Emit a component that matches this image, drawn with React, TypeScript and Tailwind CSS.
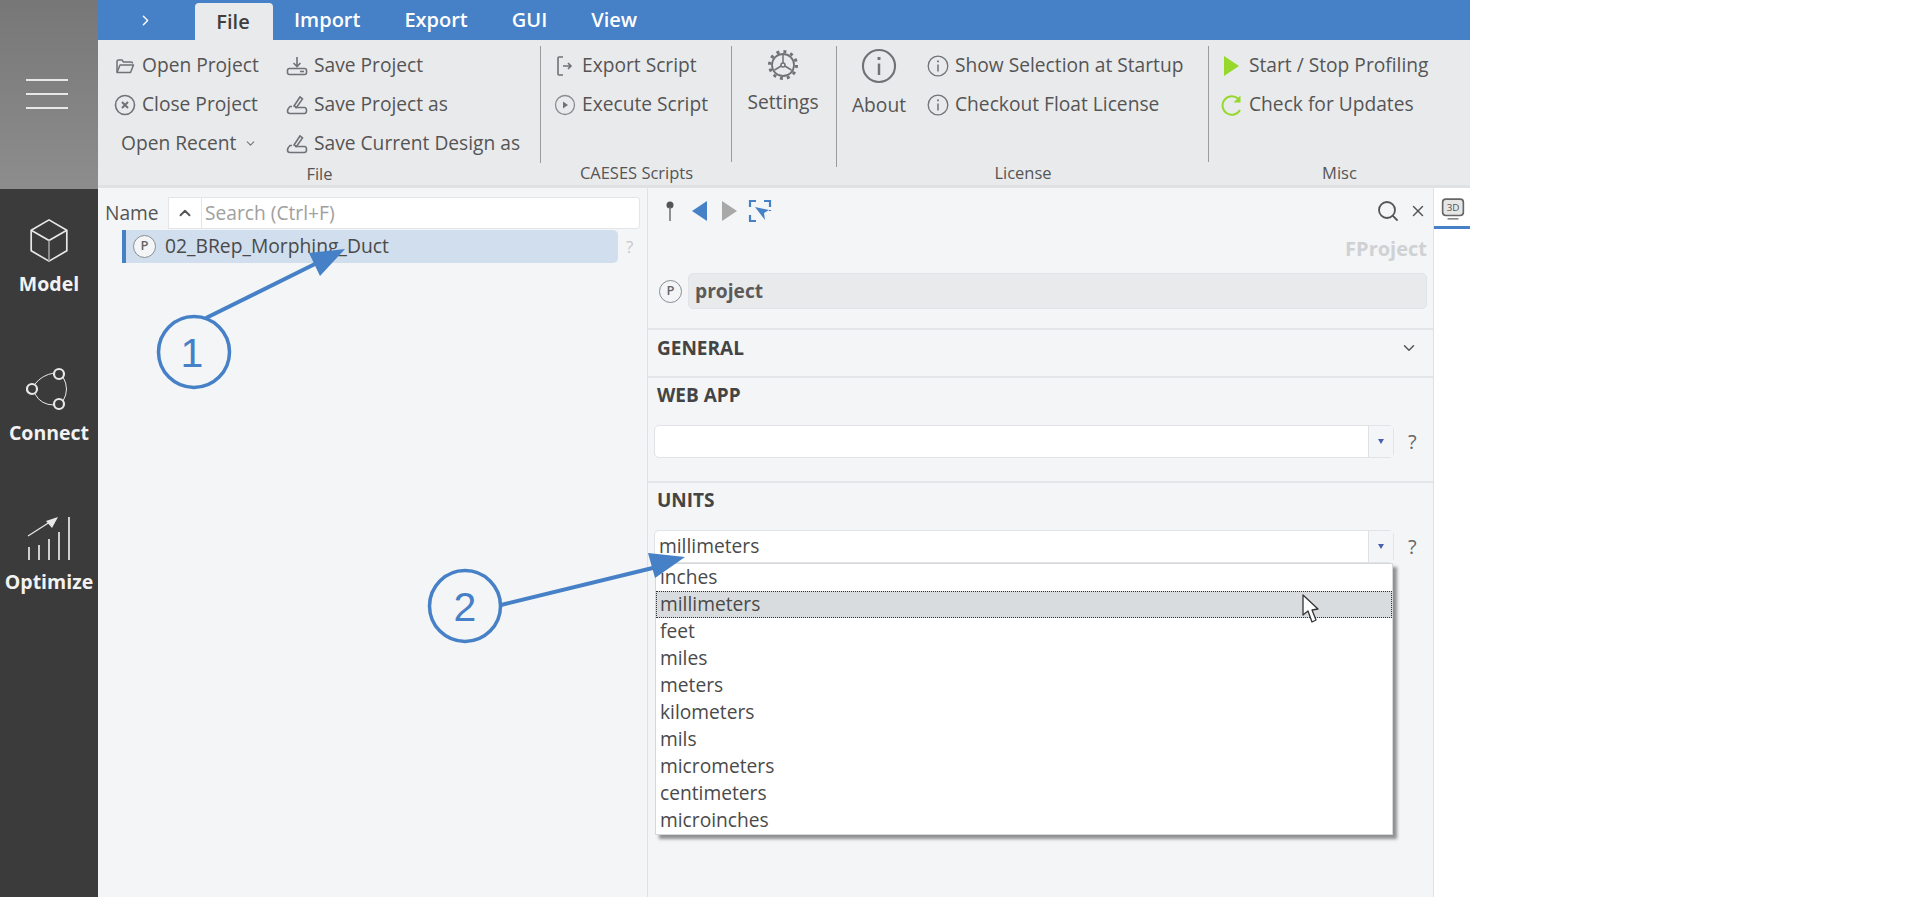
import { ReactNode } from "react";
import { ChevronDown, ChevronRight, ChevronUp, Search, X } from "lucide-react";

const stroke = "#6f7276";

// ── ribbon icons ──
const IconFolder = () => (
  <svg width="20" height="20" viewBox="0 0 20 20" fill="none" stroke={stroke} strokeWidth="1.5">
    <path d="M2 16V5.5Q2 4 3.5 4H7l1.5 2H16q1.5 0 1.5 1.500" />
    <path d="M2 16.500h13.500L18.500 9H5z" strokeLinejoin="round" />
  </svg>
);
const IconClose = () => (
  <svg width="22" height="22" viewBox="0 0 22 22" fill="none" stroke={stroke} strokeWidth="1.6">
    <circle cx="11" cy="11" r="9.500" />
    <path d="M8 8l6 6M14 8l-6 6" strokeWidth="2" />
  </svg>
);
const IconSave = () => (
  <svg width="22" height="20" viewBox="0 0 22 20" fill="none" stroke={stroke} strokeWidth="1.600">
    <path d="M11 1v9M7.500 7l3.500 3.500L14.500 7" />
    <rect x="1.500" y="12.500" width="19" height="6" rx="2" />
    <path d="M14 15.500h4" />
  </svg>
);
const IconSaveAs = () => (
  <svg width="22" height="20" viewBox="0 0 22 20" fill="none" stroke={stroke} strokeWidth="1.600">
    <path d="M8 11l6-9 2.500 2-6 8.500z" />
    <path d="M6 11.500H4Q1.500 14 1.500 16 1.500 18.500 4 18.500H18.500Q20.500 18.500 20.500 15.500 20.500 12.500 18.500 12.500H9" />
  </svg>
);
const IconExport = () => (
  <svg width="20" height="22" viewBox="0 0 20 22" fill="none" stroke={stroke} strokeWidth="1.600">
    <path d="M8 2H4Q3 2 3 3V19Q3 20 4 20H8" />
    <path d="M8 11h8M13 8l3 3-3 3" />
  </svg>
);
const IconExecute = () => (
  <svg width="22" height="22" viewBox="0 0 22 22" fill="none">
    <circle cx="11" cy="11" r="9.500" stroke="#8a8d90" strokeWidth="1.300" />
    <path d="M9 7.500l5 3.500-5 3.500z" fill={stroke} />
  </svg>
);
const IconGear = () => (
  <svg width="32" height="32" viewBox="0 0 32 32" fill="none" stroke={stroke}>
    <circle cx="16" cy="16" r="11" strokeWidth="1.800" />
    <circle cx="16" cy="16" r="13.500" strokeWidth="3" strokeDasharray="3 4.070" />
    <circle cx="16" cy="16" r="2" strokeWidth="1.500" />
    <path d="M16 14V5.500M14.200 17L7.500 21M17.800 17l6.700 4" strokeWidth="1.500" />
  </svg>
);
const IconInfo = ({ size }: { size: number }) => (
  <svg width={size} height={size} viewBox="0 0 22 22" fill="none" stroke={stroke}>
    <circle cx="11" cy="11" r="9.800" strokeWidth="1.300" />
    <path d="M11 9.500V16.500" strokeWidth="1.500" />
    <path d="M11 5.500v1.800" strokeWidth="1.800" />
  </svg>
);
const IconPlay = () => (
  <svg width="18" height="22" viewBox="0 0 18 22">
    <path d="M1 1l15 10L1 21z" fill="#96d82c" />
  </svg>
);
const IconRefresh = () => (
  <svg width="22" height="24" viewBox="0 0 22 24" fill="none">
    <path d="M17 5.500A9.300 9.300 0 1 0 19 17" stroke="#96d82c" strokeWidth="2" />
    <path d="M19.500 2.500v7h-7z" fill="#96d82c" />
  </svg>
);

// ── side bar icons ──
const IconCube = () => (
  <svg width="40" height="45" viewBox="0 0 42 48" fill="none" stroke="#e8e8e8" strokeWidth="1.800" strokeLinejoin="round">
    <path d="M21 2L40 13V35L21 46 2 35V13z" />
    <path d="M2 13l19 11 19-11" />
    <path d="M21 24v22" stroke="#9a9a9a" />
  </svg>
);
const IconConnect = () => (
  <svg width="46" height="50" viewBox="0 0 46 50" fill="none" stroke="#e8e8e8">
    <path d="M9 20Q16 11 28 9M37 13Q44 25 37 37M28 41Q15 41 9 30" strokeWidth="1" />
    <g strokeWidth="2.200">
      <circle cx="6" cy="25" r="5" />
      <circle cx="33" cy="10" r="5" />
      <circle cx="33" cy="40" r="5" />
    </g>
  </svg>
);
const IconOptimize = () => (
  <svg width="46" height="45" viewBox="0 0 46 45" fill="none" stroke="#e8e8e8" strokeWidth="1.700">
    <path d="M43 1v43M33 16v28M23 23v21M13 29v15M3 31v13" />
    <path d="M2 20L27 4" strokeWidth="1.200" />
    <path d="M32 1L20 5l6 7z" fill="#e8e8e8" stroke="none" />
  </svg>
);

const IconP = ({ size = 23 }: { size?: number }) => (
  <span
    className="flex shrink-0 items-center justify-center rounded-full border border-[#8a8d90] bg-[#f3f5f7] text-[13px] font-semibold text-[#666]"
    style={{ width: size, height: size }}
  >
    P
  </span>
);

function RibbonItem({ icon, label }: { icon: ReactNode; label: string }) {
  return (
    <div className="flex h-[39px] items-center whitespace-nowrap">
      <span className="flex w-[30px] shrink-0 items-center justify-center">{icon}</span>
      <span className="ml-[2px]">{label}</span>
    </div>
  );
}

function RibbonGroup({ label, width, last, children }: { label: string; width: string; last?: boolean; children: ReactNode }) {
  return (
    <div className={`flex shrink-0 flex-col ${width}`}>
      <div className={`flex h-[121px] ${last ? "" : "border-r border-[#9a9c9e]"}`}>{children}</div>
      <div className="-mt-[1px] text-center text-[16.500px] leading-[24px] text-[#555]">{label}</div>
    </div>
  );
}

function Combo({ value }: { value?: string }) {
  return (
    <div className="flex items-center pl-[6px]">
      <div className="flex h-[33px] w-[740px] items-center rounded-[5px] border border-[#e1e3e6] bg-white">
        <span className="flex-1 pl-[4px] text-[19.200px] text-[#4a4a4a]">{value}</span>
        <span className="flex h-full w-[25px] items-center justify-center border-l border-[#dfe1e4] bg-[#f3f5f7]">
          <span className="h-0 w-0 border-x-[3.500px] border-t-[5px] border-x-transparent border-t-[#4a5fb0]" />
        </span>
      </div>
      <span className="ml-[14px] text-[20px] text-[#666]">?</span>
    </div>
  );
}

const units = ["inches", "millimeters", "feet", "miles", "meters", "kilometers", "mils", "micrometers", "centimeters", "microinches"];

export default function App() {
  return (
    <div className="relative h-[897px] w-[1920px] overflow-hidden bg-white font-['Open_Sans',sans-serif] text-[#4a4a4a]">
      <div className="flex h-full w-[1470px]">
        {/* ── Side bar ── */}
        <aside className="flex w-[98px] shrink-0 flex-col bg-[#3b3b3b]">
          <div className="flex h-[189px] flex-col items-center justify-center gap-[12px] bg-gradient-to-b from-[#777777] to-[#8d8d8d] pb-[2px] pr-[4px]">
            <span className="h-[2px] w-[42px] bg-[#e8e8e8]" />
            <span className="h-[2px] w-[42px] bg-[#e8e8e8]" />
            <span className="h-[2px] w-[42px] bg-[#e8e8e8]" />
          </div>
          {[
            { label: "Model", icon: <IconCube /> },
            { label: "Connect", icon: <IconConnect /> },
            { label: "Optimize", icon: <IconOptimize /> },
          ].map((item) => (
            <div key={item.label} className="flex h-[149px] flex-col items-center pt-[26px]">
              <div className="flex h-[50px] items-center">{item.icon}</div>
              <span className="mt-[4px] text-[19.500px] font-bold text-[#f2f2f2]">{item.label}</span>
            </div>
          ))}
        </aside>

        <div className="flex min-w-0 flex-1 flex-col">
          {/* ── Tabs ── */}
          <div className="flex h-[40px] items-end bg-[#4680c6] text-[20px] font-semibold text-white">
            <span className="flex h-full w-[97px] items-center pl-[39px]">
              <ChevronRight size={17} strokeWidth={2} />
            </span>
            <span className="flex h-[37px] w-[78px] items-center justify-center rounded-t-[4px] bg-[#e9eaec] pr-[2px] text-[#3f3f3f]">File</span>
            <span className="ml-[21px] flex h-full items-center">Import</span>
            <span className="ml-[44px] flex h-full items-center">Export</span>
            <span className="ml-[44px] flex h-full items-center">GUI</span>
            <span className="ml-[44px] flex h-full items-center">View</span>
          </div>

          {/* ── Ribbon ── */}
          <div className="flex h-[148px] border-b-[3px] border-[#dfe1e3] bg-[#e9eaec] pt-[6px] text-[19.200px] text-[#555]">
            <RibbonGroup label="File" width="w-[443px]">
              <div className="ml-[12px] w-[172px]">
                <RibbonItem icon={<IconFolder />} label="Open Project" />
                <RibbonItem icon={<IconClose />} label="Close Project" />
                <div className="flex h-[39px] items-center pl-[11px]">
                  Open Recent
                  <ChevronDown size={13} className="ml-[8px] text-[#777]" />
                </div>
              </div>
              <div>
                <RibbonItem icon={<IconSave />} label="Save Project" />
                <RibbonItem icon={<IconSaveAs />} label="Save Project as" />
                <RibbonItem icon={<IconSaveAs />} label="Save Current Design as" />
              </div>
            </RibbonGroup>
            <RibbonGroup label="CAESES Scripts" width="w-[191px]">
              <div className="ml-[9px]">
                <RibbonItem icon={<IconExport />} label="Export Script" />
                <RibbonItem icon={<IconExecute />} label="Execute Script" />
              </div>
            </RibbonGroup>
            <div className="flex h-[121px] w-[105px] shrink-0 flex-col items-center border-r border-[#9a9c9e] pr-[2px] pt-[3px]">
              <IconGear />
              <span className="mt-[7px]">Settings</span>
            </div>
            <RibbonGroup label="License" width="w-[372px]">
              <div className="ml-[15px] flex w-[54px] flex-col items-center pt-[2px]">
                <IconInfo size={36} />
                <span className="mt-[7px]">About</span>
              </div>
              <div className="ml-[17px]">
                <RibbonItem icon={<IconInfo size={22} />} label="Show Selection at Startup" />
                <RibbonItem icon={<IconInfo size={22} />} label="Checkout Float License" />
              </div>
            </RibbonGroup>
            <RibbonGroup label="Misc" width="w-[261px]" last>
              <div className="ml-[8px]">
                <RibbonItem icon={<IconPlay />} label="Start / Stop Profiling" />
                <RibbonItem icon={<IconRefresh />} label="Check for Updates" />
              </div>
            </RibbonGroup>
          </div>

          <div className="flex min-h-0 flex-1">
            {/* ── Tree panel ── */}
            <section className="w-[550px] shrink-0 border-r border-[#dfe1e4] bg-[#f3f5f7] pt-[9px]">
              <div className="flex h-[32px] items-center pl-[7px] pr-[7px] text-[19.200px]">
                <span className="w-[63px] text-[#555]">Name</span>
                <span className="flex h-full w-[33px] items-center justify-center border-y border-l border-[#e3e5e8] bg-white">
                  <ChevronUp size={18} strokeWidth={2.500} className="text-[#555]" />
                </span>
                <span className="flex h-full flex-1 items-center rounded-r-[3px] border border-[#e3e5e8] bg-white pl-[3px] text-[#a0a0a0]">Search (Ctrl+F)</span>
              </div>
              <div className="mt-[1px] flex items-center pl-[24px]">
                <div className="flex h-[33px] w-[496px] items-center rounded-r-[5px] border-l-[4px] border-[#4680c6] bg-[#d0deed] pb-[1px] pl-[7px]">
                  <IconP />
                  <span className="ml-[9px] text-[19.300px] text-[#4a4a4a]">02_BRep_Morphing_Duct</span>
                </div>
                <span className="ml-[8px] text-[17px] text-[#c8c8c8]">?</span>
              </div>
            </section>

            {/* ── Properties panel ── */}
            <section className="w-[786px] shrink-0 border-r border-[#dfe1e4] bg-[#f3f5f7]">
              <div className="flex h-[46px] items-center pl-[17px] pr-[6px]">
                <svg width="10" height="24" viewBox="0 0 10 24" fill="none">
                  <circle cx="5" cy="6" r="3.500" fill="#555" />
                  <path d="M5 8v14" stroke="#777" strokeWidth="1.600" />
                </svg>
                <svg className="ml-[16px]" width="17" height="22" viewBox="0 0 17 22"><path d="M16 1v20L1 11z" fill="#4680c6" /></svg>
                <svg className="ml-[13px]" width="17" height="22" viewBox="0 0 17 22"><path d="M1 1v20l15-10z" fill="#a8a8a8" /></svg>
                <svg className="ml-[10px]" width="24" height="24" viewBox="0 0 24 24" fill="none">
                  <path d="M8 2H2v6M16 2h6v6M2 16v6h6M22 11v1" stroke="#4680c6" strokeWidth="2.200" />
                  <path d="M7 8l14 3-5 3 1 7z" fill="#4680c6" />
                </svg>
                <span className="flex-1" />
                <Search size={24} strokeWidth={1.800} className="text-[#555]" />
                <X size={18} strokeWidth={2} className="ml-[9px] text-[#555]" />
              </div>
              <div className="mt-[3px] pr-[6px] text-right text-[20px] font-bold leading-[24px] text-[#cfd1d3]">FProject</div>
              <div className="mt-[12px] flex items-center pl-[11px] pr-[6px]">
                <IconP />
                <div className="ml-[6px] flex h-[36px] flex-1 items-center rounded-[5px] border border-[#e1e3e6] bg-[#e9eaec] pl-[6px] text-[19.200px] font-bold text-[#5a5a5a]">project</div>
              </div>

              <div className="mt-[19px] flex h-[48px] items-center justify-between border-t-2 border-[#e3e5e8] pb-[10px] pl-[9px] pr-[15px]">
                <span className="text-[19px] font-bold text-[#444]">GENERAL</span>
                <ChevronDown size={18} className="text-[#555]" />
              </div>
              <div className="h-[105px] border-t-2 border-[#e3e5e8]">
                <div className="flex h-[35px] items-center pl-[9px] text-[19px] font-bold text-[#444]">WEB APP</div>
                <div className="mt-[12px]">
                  <Combo />
                </div>
              </div>
              <div className="relative border-t-2 border-[#e3e5e8]">
                <div className="flex h-[35px] items-center pl-[9px] text-[19px] font-bold text-[#444]">UNITS</div>
                <div className="mt-[12px]">
                  <Combo value="millimeters" />
                </div>

                {/* dropdown list, hangs over the panel */}
                <ul className="absolute left-[7px] top-[80px] w-[738px] border border-[#d5d7da] bg-white text-[19.200px] text-[#4a4a4a] shadow-[4px_4px_3px_rgba(90,90,90,0.65)]">
                  {units.map((unit) => (
                    <li
                      key={unit}
                      className={
                        unit === "millimeters"
                          ? "flex h-[27px] items-center border border-dotted border-[#333] bg-[#d9dcdf] pl-[3px]"
                          : "flex h-[27px] items-center pl-[4px]"
                      }
                    >
                      {unit}
                    </li>
                  ))}
                </ul>
              </div>
            </section>

            {/* ── 3D tab strip ── */}
            <section className="flex-1 bg-white">
              <div className="flex h-[41px] items-center justify-center border-b-[3px] border-[#4680c6] pl-[2px] pt-[4px]">
                <svg width="24" height="24" viewBox="0 0 22 22" fill="none">
                  <rect x="1.500" y="2" width="19" height="15" rx="3" stroke="#666" strokeWidth="1.500" fill="#e6e6e6" />
                  <path d="M6 20h10" stroke="#888" strokeWidth="1.500" />
                  <text x="11" y="13" textAnchor="middle" fontSize="9" fill="#555" fontFamily="Open Sans">3D</text>
                </svg>
              </div>
            </section>
          </div>
        </div>
      </div>

      {/* ── Screenshot annotations and mouse pointer ── */}
      <svg className="pointer-events-none absolute left-0 top-0" width="1470" height="897" fill="none">
        <circle cx="194" cy="352" r="35.500" stroke="#4680c6" strokeWidth="3.500" />
        <path d="M206 318L325 259" stroke="#4680c6" strokeWidth="4" />
        <path d="M309 253L345 249 320 276z" fill="#4680c6" />
        <text x="192" y="367" textAnchor="middle" fontSize="41" fill="#4680c6" fontFamily="Liberation Sans">1</text>
        <circle cx="465" cy="606" r="35.500" stroke="#4680c6" strokeWidth="3.500" />
        <path d="M501 605L665 565" stroke="#4680c6" strokeWidth="4" />
        <path d="M648 553L685 557 655 578z" fill="#4680c6" />
        <text x="465" y="621" textAnchor="middle" fontSize="41" fill="#4680c6" fontFamily="Liberation Sans">2</text>
        <path d="M1303 595V615L1308 611 1312 622 1316 620 1312 610 1318 609z" fill="#fff" stroke="#333" strokeWidth="1.300" strokeLinejoin="round" />
      </svg>
    </div>
  );
}
